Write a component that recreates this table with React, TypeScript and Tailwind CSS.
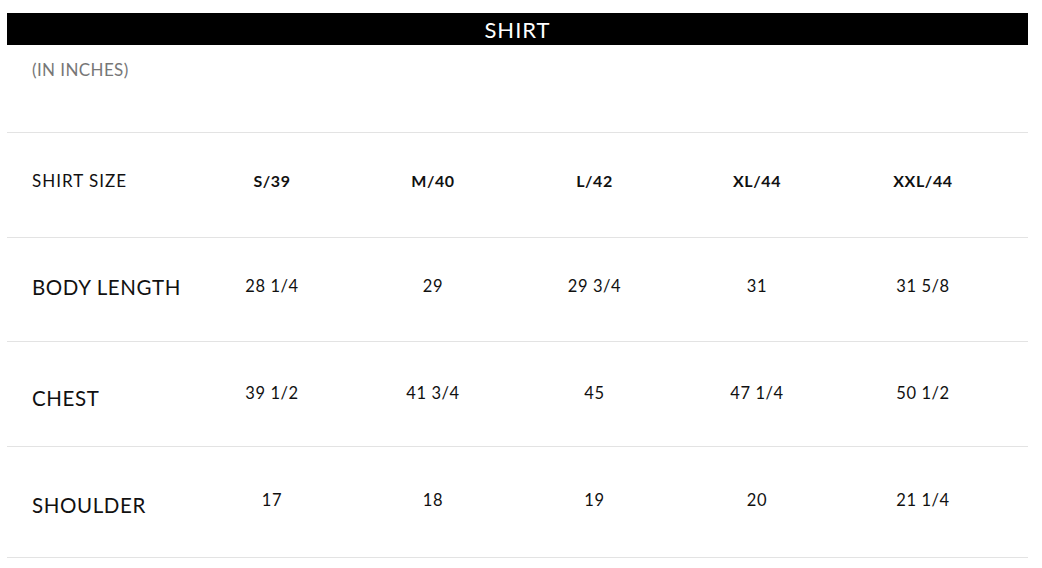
const sizes = ['S/39', 'M/40', 'L/42', 'XL/44', 'XXL/44'];

const rows = [
  { label: 'BODY LENGTH', values: ['28 1/4', '29', '29 3/4', '31', '31 5/8'], row: 'h-[104px] pb-[6px]', lab: 'pt-[2px]' },
  { label: 'CHEST', values: ['39 1/2', '41 3/4', '45', '47 1/4', '50 1/2'], row: 'h-[105px] pb-[2px]', lab: 'pt-[10px]' },
  { label: 'SHOULDER', values: ['17', '18', '19', '20', '21 1/4'], row: 'h-[111px] pb-[4px]', lab: 'pt-[10px]' },
];

const cols = 'grid grid-cols-[185px_160px_162px_161px_164px_168px_1fr]';

export default function App() {
  return (
    <div className="min-h-[568px] bg-white pt-[13px] font-['Lato',sans-serif] text-[#111]">
      <div className="ml-[7px] w-[1021px]">
        <div className="flex h-[32px] items-center justify-center bg-black text-[22px] tracking-[1px] text-white">
          SHIRT
        </div>

        <div className="h-[87px] pl-[25px] pt-[15px] text-[17px] leading-[20px] tracking-[0.4px] text-[#777]">
          (IN INCHES)
        </div>

        {/* header row */}
        <div className={`${cols} h-[105px] items-center border-t border-[#e3e3e3] pb-[9px]`}>
          <div className="pl-[25px] text-[17px] tracking-[1px]">SHIRT SIZE</div>
          {sizes.map((s) => (
            <div key={s} className="text-center text-[16px] font-bold tracking-[0.6px]">
              {s}
            </div>
          ))}
        </div>

        {rows.map((r) => (
          <div key={r.label} className={`${cols} ${r.row} items-center border-t border-[#e3e3e3]`}>
            <div className={`pl-[25px] ${r.lab} text-[20.5px] tracking-[0.6px]`}>{r.label}</div>
            {r.values.map((v, i) => (
              <div key={i} className="whitespace-pre text-center text-[16.5px] tracking-[0.6px]">
                {v}
              </div>
            ))}
          </div>
        ))}
        <div className="border-t border-[#e3e3e3]" />
      </div>
    </div>
  );
}
